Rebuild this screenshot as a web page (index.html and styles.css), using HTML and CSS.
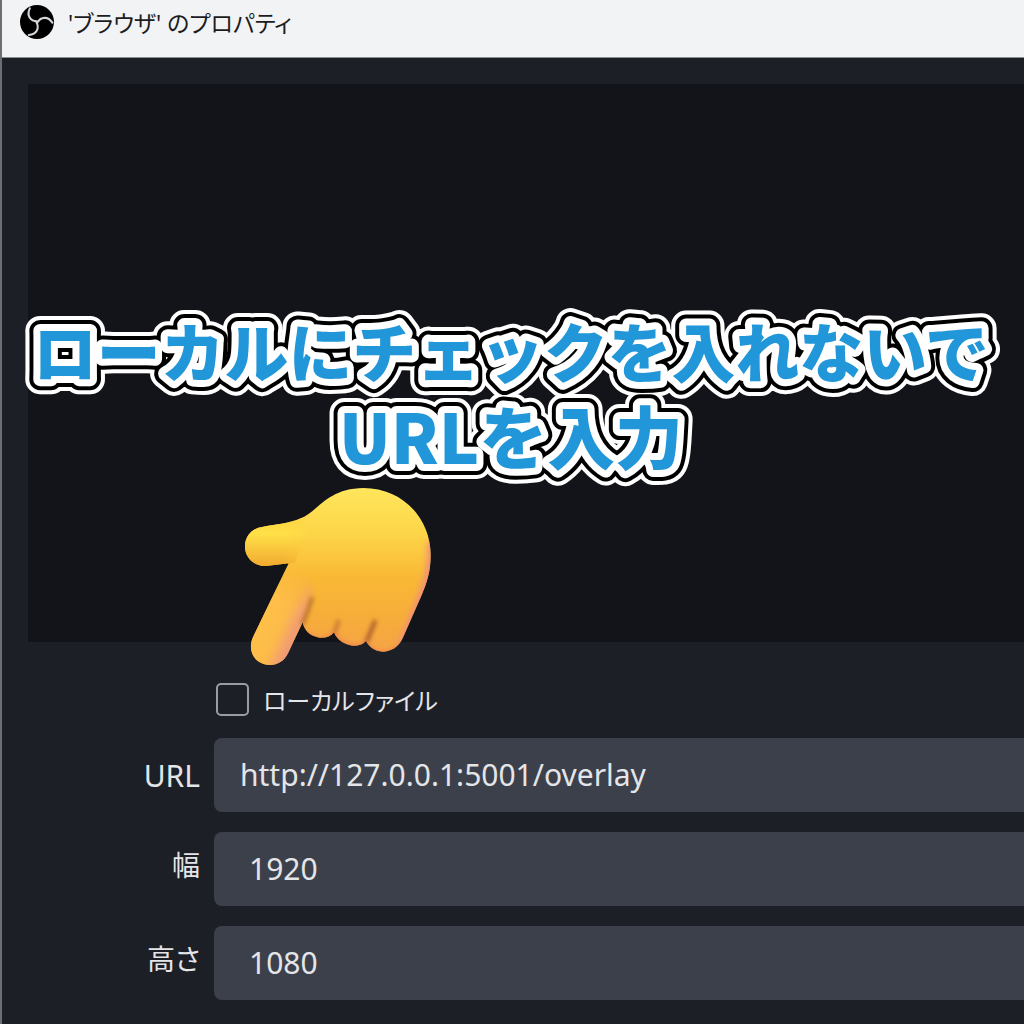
FILE: index.html
```html
<!DOCTYPE html>
<html lang="ja">
<head>
  <meta charset="UTF-8">
  <meta name="viewport" content="width=device-width, initial-scale=1.0">
  <title>'ブラウザ' のプロパティ</title>
  <link rel="stylesheet" href="styles.css">
</head>
<body>
  <div class="window">
    <header class="titlebar">
      <svg class="logo" viewBox="0 0 100 100" aria-hidden="true">
        <circle cx="50" cy="50" r="50" fill="#000"/>
        <g id="arms" fill="none" stroke="#d4d6d8" stroke-width="6" stroke-linecap="round">
          <path id="arm" d="M50 48C32 48 18 32 29 10"/>
          <use href="#arm" transform="rotate(120 50 50)"/>
          <use href="#arm" transform="rotate(240 50 50)"/>
        </g>
      </svg>
      <h1 class="title">'ブラウザ' のプロパティ</h1>
    </header>

    <main class="content">
      <div class="preview"></div>

      <form class="properties">
        <div class="check-row">
          <input type="checkbox" id="localFile" class="check">
          <label for="localFile">ローカルファイル</label>
        </div>

        <label class="name" for="url">URL</label>
        <input class="field" type="text" id="url" value="http://127.0.0.1:5001/overlay">

        <label class="name name-ja" for="width">幅</label>
        <input class="field number" type="text" id="width" value="1920">

        <label class="name name-ja" for="height">高さ</label>
        <input class="field number" type="text" id="height" value="1080">
      </form>
    </main>

    <!-- caption: outlines are stacked strokes of the same text -->
    <svg class="caption" viewBox="0 0 1024 200">
      <defs>
        <g id="caption-text">
          <text x="510" y="77">ローカルにチェックを入れないで</text>
          <text x="510" y="164" class="caption-large">URLを入力</text>
        </g>
      </defs>
      <use href="#caption-text" class="outline-outer"/>
      <use href="#caption-text" class="outline-black"/>
      <use href="#caption-text" class="outline-inner"/>
      <use href="#caption-text" class="fill"/>
    </svg>

    <svg class="hand" viewBox="0 0 660 600" aria-hidden="true">
      <defs>
        <linearGradient id="skin" x1="0" y1="0" x2="0" y2="1">
          <stop offset="0" stop-color="#ffe65c"/>
          <stop offset=".25" stop-color="#fdd648"/>
          <stop offset=".5" stop-color="#f9b935"/>
          <stop offset=".75" stop-color="#f6ac3a"/>
          <stop offset="1" stop-color="#f5a04c"/>
        </linearGradient>
        <linearGradient id="thumb" x1="0" y1="0" x2="0" y2="1">
          <stop offset="0" stop-color="#fdd440"/>
          <stop offset=".3" stop-color="#ffe048"/>
          <stop offset="1" stop-color="#efa02c"/>
        </linearGradient>
        <linearGradient id="finger" gradientUnits="userSpaceOnUse" x1="110" y1="420" x2="206" y2="465">
          <stop offset="0" stop-color="#fec048"/>
          <stop offset=".5" stop-color="#fdbb48"/>
          <stop offset="1" stop-color="#f0967c"/>
        </linearGradient>
        <linearGradient id="finger-fade" gradientUnits="userSpaceOnUse" x1="215" y1="270" x2="165" y2="390">
          <stop offset="0" stop-color="#fff" stop-opacity="0"/>
          <stop offset="1" stop-color="#fff"/>
        </linearGradient>
        <mask id="finger-mask" maskUnits="userSpaceOnUse" x="0" y="0" width="660" height="600">
          <rect width="660" height="600" fill="url(#finger-fade)"/>
        </mask>
        <linearGradient id="thumb-fade">
          <stop offset=".6" stop-color="#fff"/>
          <stop offset="1" stop-color="#fff" stop-opacity="0"/>
        </linearGradient>
        <mask id="thumb-mask" maskUnits="userSpaceOnUse" x="30" y="100" width="220" height="200">
          <rect x="30" y="100" width="220" height="200" fill="url(#thumb-fade)"/>
        </mask>
        <filter id="soft" x="-50%" y="-50%" width="200%" height="200%"><feGaussianBlur stdDeviation="10"/></filter>
        <filter id="softer" filterUnits="userSpaceOnUse" x="0" y="0" width="660" height="600"><feGaussianBlur stdDeviation="6"/></filter>
        <path id="hand-shape" d="M212 130C262 112 290 40 400 39C518 39 602 130 602 240C602 290 590 325 575 360L518 490C505 518 482 530 458 530C435 529 418 517 408 498C397 510 382 513 368 512C341 509 321 494 312 472C302 485 285 490 268 488C240 484 222 466 218 442L174 535C162 560 140 571 118 570C84 568 60 543 63 510C64 499 67 490 72 480L176 265L108 273C70 273 45 248 45 214C45 180 70 158 100 155C140 148 180 145 212 130Z"/>
        <clipPath id="hand-clip"><use href="#hand-shape"/></clipPath>
      </defs>
      <use href="#hand-shape" fill="url(#skin)"/>
      <g clip-path="url(#hand-clip)">
        <path d="M604 200C612 290 590 345 515 515" fill="none" stroke="#f28a7e" stroke-width="26" filter="url(#soft)"/>
        <path d="M30 140L212 128L235 150L195 262L100 290L30 275Z" fill="url(#thumb)" mask="url(#thumb-mask)"/>
        <path d="M205 215L250 350L218 442L160 585L40 580L50 480L176 265Z" fill="url(#finger)" mask="url(#finger-mask)" filter="url(#softer)"/>
        <path d="M246 366C240 395 228 420 216 450" fill="none" stroke="#b06a2c" stroke-width="10" filter="url(#softer)"/>
        <path d="M326 435L312 480" fill="none" stroke="#c07030" stroke-width="10" filter="url(#softer)"/>
        <path d="M436 436L408 505" fill="none" stroke="#a85a2c" stroke-width="12" filter="url(#softer)"/>
        <path d="M225 472C255 505 290 495 312 478C335 510 370 525 405 507C435 545 480 540 505 515" fill="none" stroke="#f0884c" stroke-width="14" filter="url(#softer)"/>
      </g>
    </svg>
  </div>
</body>
</html>
```
FILE: styles.css
```css
* {
  box-sizing: border-box;
}
body {
  margin: 0;
  background-color: #1d1f26;
  color: #e4e5e8;
  font-family: "Noto Sans", "Noto Sans CJK JP", sans-serif;
}
.window {
  position: relative;
  min-height: 100vh;
  border-left: 2px solid #6c6e73;
  overflow: hidden;
}

.titlebar {
  display: flex;
  align-items: flex-start;
  gap: 14px;
  height: 58px;
  padding: 5px 18px;
  background-color: #f1f3f5;
  border-bottom: 1px solid #8b8d91;
}
.logo {
  width: 34px;
  height: 34px;
}
.title {
  margin: 0;
  color: #1c1c1e;
  font-size: 23px;
  font-weight: 400;
  line-height: 36px;
  font-feature-settings: "palt";
}

.content {
  padding: 26px 0 22px 26px;
}
.preview {
  height: 558px;
  background-color: #131419;
}

.properties {
  display: grid;
  grid-template-columns: 172px 1fr;
  column-gap: 14px;
  row-gap: 20px;
  align-items: center;
  padding-top: 38px;
  font-size: 30px;
}
.check-row {
  grid-column: 2;
  display: flex;
  align-items: center;
  gap: 14px;
  height: 38px;
  padding-left: 2px;
  font-size: 24px;
  font-feature-settings: "palt";
}
.check {
  appearance: none;
  width: 33px;
  height: 33px;
  margin: 0;
  border: 2px solid #9b9ca2;
  border-radius: 5px;
}
.name {
  text-align: right;
}
.name-ja {
  padding-bottom: 10px;
  font-size: 28px;
  font-feature-settings: "palt";
}
.field {
  width: 100%;
  height: 74px;
  padding: 0 26px 2px;
  border: 0;
  border-radius: 8px 0 0 8px;
  background-color: #3c404b;
  color: inherit;
  font: inherit;
}
.number {
  padding: 0 35px 2px;
}

.caption {
  position: absolute;
  top: 300px;
  left: 0;
  width: 100%;
  font-family: "Noto Sans CJK JP", sans-serif;
  font-size: 64px;
  font-weight: 900;
  text-anchor: middle;
  stroke-linejoin: round;
}
.caption-large {
  font-size: 68px;
}
.outline-outer {
  fill: #fff;
  stroke: #fff;
  stroke-width: 30px;
}
.outline-black {
  fill: #000;
  stroke: #000;
  stroke-width: 22px;
}
.outline-inner {
  fill: #fff;
  stroke: #fff;
  stroke-width: 14px;
}
.fill {
  fill: #2196d8;
}

.hand {
  position: absolute;
  top: 475px;
  left: 228px;
  width: 220px;
}
```
